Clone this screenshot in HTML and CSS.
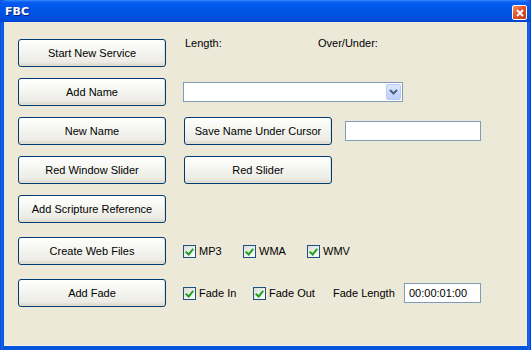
FILE: index.html
```html
<!DOCTYPE html>
<html lang="en">
<head>
  <meta charset="UTF-8">
  <title>FBC</title>
  <link rel="stylesheet" href="styles.css">
</head>
<body>
  <div class="window">
    <div class="titlebar">
      <span class="title">FBC</span>
      <span class="close">
        <svg width="8" height="8" viewBox="0 0 8 8"><path d="M1 1 L7 7 M7 1 L1 7" stroke="#fff" stroke-width="2"/></svg>
      </span>
    </div>

    <div class="client">
      <div class="row first">
        <button class="btn">Start New Service</button>
        <span class="label length">Length:</span>
        <span class="label">Over/Under:</span>
      </div>

      <div class="row">
        <button class="btn">Add Name</button>
        <div class="combo">
          <span class="combo-arrow">
            <svg width="9" height="6" viewBox="0 0 9 6"><path d="M1 1 L4.5 4.5 L8 1" fill="none" stroke="#4d6185" stroke-width="2"/></svg>
          </span>
        </div>
      </div>

      <div class="row">
        <button class="btn">New Name</button>
        <button class="btn">Save Name Under Cursor</button>
        <input class="textbox name-box" type="text">
      </div>

      <div class="row">
        <button class="btn">Red Window Slider</button>
        <button class="btn">Red Slider</button>
      </div>

      <div class="row">
        <button class="btn">Add Scripture Reference</button>
      </div>

      <div class="row wide">
        <button class="btn">Create Web Files</button>
        <label class="check mp3"><span class="box"></span>MP3</label>
        <label class="check wma"><span class="box"></span>WMA</label>
        <label class="check"><span class="box"></span>WMV</label>
      </div>

      <div class="row wide">
        <button class="btn">Add Fade</button>
        <label class="check fade-in"><span class="box"></span>Fade In</label>
        <label class="check fade-out"><span class="box"></span>Fade Out</label>
        <span class="label fade-length">Fade Length</span>
        <input class="textbox time-box" type="text" value="00:00:01:00">
      </div>
    </div>
  </div>
</body>
</html>
```

FILE: styles.css
```css
body {
  margin: 0;
  font-family: 'Liberation Sans', Arial, sans-serif;
  font-size: 11px;
  color: #000;
}

.window {
  width: 531px;
  height: 350px;
  display: flex;
  flex-direction: column;
  background: linear-gradient(to right, #0831d9 0, #166aee 1px, #0855dd 3px, #0855dd 527px, #166aee 529px, #0831d9 531px);
}

.titlebar {
  height: 22px;
  box-sizing: border-box;
  display: flex;
  align-items: center;
  justify-content: space-between;
  padding: 0 4px 0 5px;
  background: linear-gradient(to bottom, #3a8cf8 0, #0a5ef2 2px, #0058ee 5px, #0053e4 12px, #004fdf 18px, #0044d0 22px);
  border-radius: 6px 6px 0 0;
}

.title {
  color: #fff;
  font-family: 'DejaVu Sans', sans-serif;
  font-weight: bold;
  font-size: 11px;
  text-shadow: 1px 1px 0 #0a1f7a;
}

.close {
  width: 13px;
  height: 13px;
  margin-top: 3px;
  display: flex;
  align-items: center;
  justify-content: center;
  border: 1px solid #fff;
  border-radius: 2px;
  background: linear-gradient(135deg, #f0916c, #e0522a 45%, #c83c12);
}

.client {
  flex: 1;
  margin: 0 4px 4px;
  background: #ece9d8;
  padding: 17px 14px 0;
  border-right: 1px solid #f4f2e8;
  border-bottom: 1px solid #f4f2e8;
}

.row {
  display: flex;
  align-items: center;
  margin-bottom: 11px;
}

.row.wide {
  margin-top: 14px;
  margin-bottom: 14px;
}

.row.first {
  align-items: flex-start;
}

.btn {
  width: 148px;
  height: 28px;
  margin-right: 18px;
  padding: 0;
  font-family: inherit;
  font-size: 11px;
  color: #000;
  border: 1px solid #003c74;
  border-radius: 3px;
  background: linear-gradient(to bottom, #ffffff 0, #f6f6f2 40%, #ecebe4 85%, #d8d4c6 100%);
  box-shadow: inset -1px -1px 0 #e3e0d2;
}

.label {
  line-height: 1;
}

.row.first .label {
  margin-top: -1px;
}

.length {
  margin-left: 1px;
  width: 133px;
}

.combo {
  width: 217px;
  height: 18px;
  margin-left: -1px;
  border: 1px solid #7f9db9;
  background: #fff;
  display: flex;
  justify-content: flex-end;
  align-items: center;
  padding-right: 1px;
}

.combo-arrow {
  width: 15px;
  height: 16px;
  display: flex;
  align-items: center;
  justify-content: center;
  border-radius: 2px;
  background: linear-gradient(to bottom, #dce7fe, #bcd0fa);
  border: 1px solid #b9cbf2;
  box-sizing: border-box;
}

.textbox {
  box-sizing: border-box;
  height: 20px;
  border: 1px solid #7f9db9;
  background: #fff;
  font-family: inherit;
  font-size: 11px;
  padding: 0 2px;
  outline: none;
}

.name-box {
  width: 136px;
  margin-left: -5px;
}

.check {
  display: flex;
  align-items: center;
  margin-left: -1px;
}

.box {
  width: 11px;
  height: 11px;
  border: 1px solid #1c5180;
  background: linear-gradient(135deg, #dcdcd6, #fff);
  margin-right: 3px;
  position: relative;
}

.box::after {
  content: "";
  position: absolute;
  left: 3px;
  top: 1px;
  width: 3px;
  height: 6px;
  border: solid #21a121;
  border-width: 0 2px 2px 0;
  transform: rotate(40deg);
}

.mp3 {
  width: 61px;
}

.wma {
  width: 65px;
}

.fade-in {
  width: 71px;
}

.fade-out {
  width: 80px;
}

.fade-length {
  width: 71px;
}

.time-box {
  width: 77px;
  height: 20px;
  padding: 0 4px;
}
```
